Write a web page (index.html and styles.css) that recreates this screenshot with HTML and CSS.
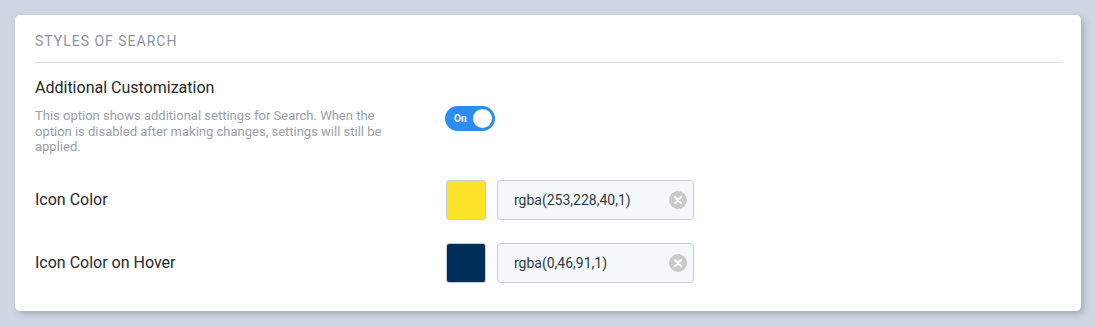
FILE: index.html
```html
<!DOCTYPE html>
<html lang="en">
<head>
  <meta charset="UTF-8">
  <meta name="viewport" content="width=device-width, initial-scale=1.0">
  <title>Styles of Search</title>
  <link rel="stylesheet" href="styles.css">
</head>
<body>
  <div class="card">
    <div class="card-title">Styles of Search</div>

    <!-- Additional customization -->
    <div class="row row-toggle">
      <div class="row-label">
        <div class="label-title">Additional Customization</div>
        <p class="label-desc">This option shows additional settings for Search. When the option is disabled after making changes, settings will still be applied.</p>
      </div>
      <div class="row-control">
        <label class="switch">
          <span class="switch-text">On</span>
          <span class="switch-knob"></span>
        </label>
      </div>
    </div>

    <!-- Icon color -->
    <div class="row">
      <div class="row-label">
        <div class="label-title">Icon Color</div>
      </div>
      <div class="row-control">
        <span class="swatch" style="background: rgba(253,228,40,1)"></span>
        <div class="color-input">
          <span class="color-value">rgba(253,228,40,1)</span>
          <span class="clear-btn">
            <svg width="18" height="18" viewBox="0 0 18 18"><circle cx="9" cy="9" r="9" fill="#c9c9c9"/><path d="M6 6l6 6M12 6l-6 6" stroke="#fff" stroke-width="2.2" stroke-linecap="round"/></svg>
          </span>
        </div>
      </div>
    </div>

    <!-- Icon color on hover -->
    <div class="row">
      <div class="row-label">
        <div class="label-title">Icon Color on Hover</div>
      </div>
      <div class="row-control">
        <span class="swatch" style="background: rgba(0,46,91,1)"></span>
        <div class="color-input">
          <span class="color-value">rgba(0,46,91,1)</span>
          <span class="clear-btn">
            <svg width="18" height="18" viewBox="0 0 18 18"><circle cx="9" cy="9" r="9" fill="#c9c9c9"/><path d="M6 6l6 6M12 6l-6 6" stroke="#fff" stroke-width="2.2" stroke-linecap="round"/></svg>
          </span>
        </div>
      </div>
    </div>
  </div>
</body>
</html>
```

FILE: styles.css
```css
/* General Styles */
body {
  margin: 0;
  padding: 15px;
  font-family: Roboto, "Liberation Sans", Arial, sans-serif;
  background-color: #d0d6e2;
}

/* Card */
.card {
  background: #fff;
  border-radius: 5px;
  box-shadow: 3px 3px 6px rgba(90, 100, 130, 0.35);
  padding: 16px 19px 28px 20px;
}

.card-title {
  font-size: 14px;
  line-height: 20px;
  letter-spacing: 1px;
  text-transform: uppercase;
  color: #8d959f;
  padding-bottom: 11px;
  border-bottom: 1px solid #dcdde5;
}

/* Rows */
.row {
  display: flex;
  align-items: center;
  margin-top: 23px;
}

.row-toggle {
  margin-top: 15px;
}

.row-toggle + .row {
  margin-top: 25px;
}

.row-label {
  width: 410px;
  flex-shrink: 0;
}

.label-title {
  font-size: 16px;
  line-height: 20px;
  color: #23282d;
}

.label-desc {
  margin: 10px 0 0;
  width: 355px;
  font-size: 13px;
  line-height: 15.5px;
  color: #9aa1a9;
}

.row-control {
  display: flex;
  align-items: center;
  gap: 11px;
}

/* Switch */
.switch {
  width: 50px;
  height: 25px;
  border-radius: 13px;
  background: #2d8cf0;
  display: flex;
  align-items: center;
  justify-content: space-between;
  padding: 0 3px 0 9px;
  box-sizing: border-box;
  margin-top: 4px;
}

.switch-text {
  font-size: 10px;
  font-weight: bold;
  color: #fff;
}

.switch-knob {
  width: 19px;
  height: 19px;
  border-radius: 50%;
  background: #fff;
}

/* Color picker */
.swatch {
  width: 40px;
  height: 40px;
  box-sizing: border-box;
  border: 1px solid #c9ced6;
  border-radius: 3px;
  margin-left: 1px;
}

.color-input {
  width: 197px;
  height: 40px;
  box-sizing: border-box;
  border: 1px solid #c8ced6;
  border-radius: 4px;
  background: #f5f8fb;
  display: flex;
  align-items: center;
  justify-content: space-between;
  padding: 0 6px 0 16px;
}

.color-value {
  font-size: 14px;
  color: #333a44;
}

.clear-btn {
  display: flex;
}
```
